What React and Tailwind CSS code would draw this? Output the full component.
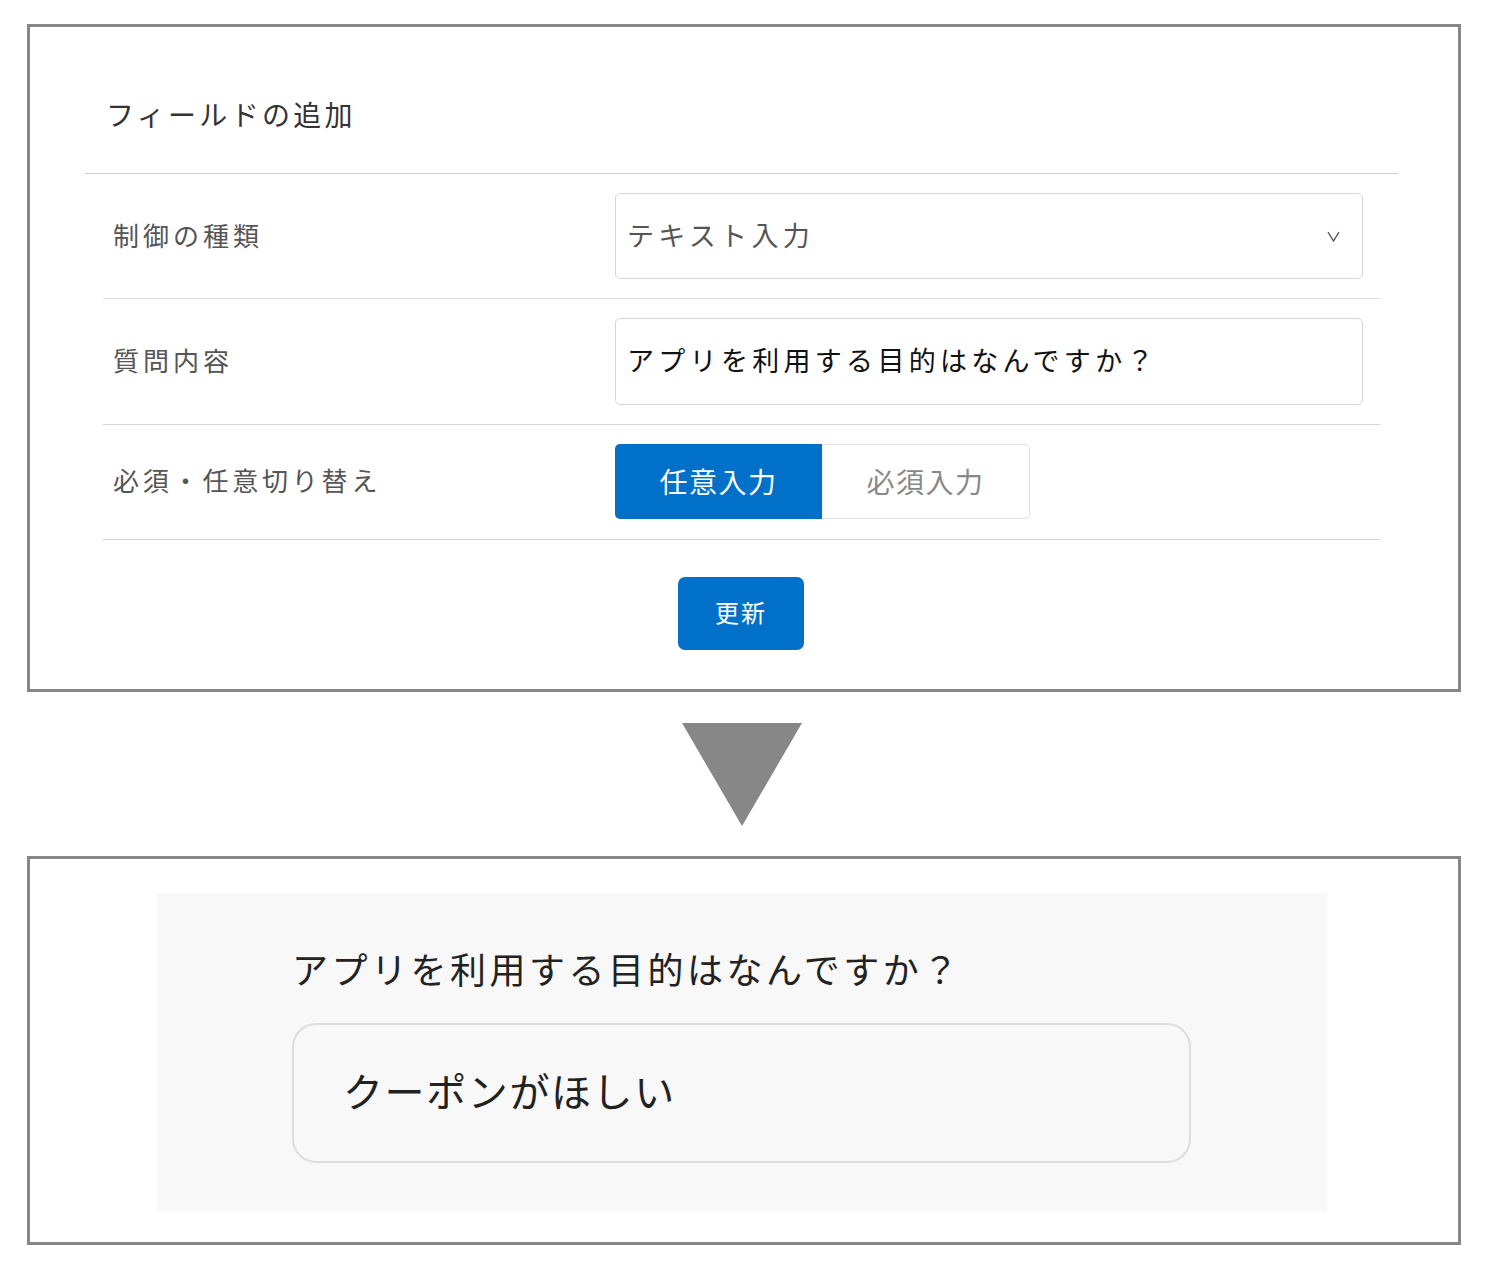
export default function App() {
  const font = { fontFamily: '"Noto Sans CJK JP", "Noto Sans", sans-serif' };
  return (
    <div className="bg-white w-[1488px] min-h-[1269px] pt-[24px] pl-[27px]" style={font}>
      {/* Top panel */}
      <div className="w-[1434px] border-[3px] border-[#878787] bg-white">
        <div className="ml-[55px] mr-[60px] border-b border-[#cccccc]">
          <div className="pl-[21px] pt-[67px] pb-[39px] leading-[40px] text-[28px] tracking-[3.3px] text-[#333333]">
            フィールドの追加
          </div>
        </div>
        <div className="ml-[73px] mr-[78px]">
          <div className="flex items-center border-b border-[#dddddd] pt-[19px] pb-[19px] pr-[17px]">
            <div className="w-[512px] pl-[10px] pb-[2px] text-[26px] tracking-[4px] text-[#555555] leading-none">
              制御の種類
            </div>
            <div className="flex-1 h-[86px] border border-[#d6d6d6] rounded-[5px] flex items-center justify-between pl-[11px] pr-[22px]">
              <span className="text-[27px] tracking-[4.3px] text-[#555555] pb-[2px]">テキスト入力</span>
              <svg width="13" height="11" viewBox="0 0 13 11">
                <path d="M1 1 L6.5 10 L12 1" fill="none" stroke="#555555" strokeWidth="1.4" />
              </svg>
            </div>
          </div>
          <div className="flex items-center border-b border-[#d4d4d4] pt-[19px] pb-[19px] pr-[17px]">
            <div className="w-[512px] pl-[10px] pb-[3px] text-[26px] tracking-[4px] text-[#555555] leading-none">
              質問内容
            </div>
            <div className="flex-1 h-[87px] border border-[#d6d6d6] rounded-[5px] flex items-center pl-[11px]">
              <span className="text-[27px] tracking-[4.3px] text-[#111111] pb-[2px]">アプリを利用する目的はなんですか？</span>
            </div>
          </div>
          <div className="flex items-center border-b border-[#d4d4d4] pt-[19px] pb-[20px] pr-[17px]">
            <div className="w-[512px] pl-[10px] pb-[3px] text-[26px] tracking-[3.8px] text-[#555555] leading-none">
              必須・任意切り替え
            </div>
            <div className="flex h-[75px] w-[415px]">
              <div className="w-[207px] bg-[#0070c9] rounded-l-[5px] flex items-center justify-center pb-[2px] text-white text-[28px] tracking-[1.5px]">
                任意入力
              </div>
              <div className="flex-1 border border-l-0 border-[#e0e0e0] rounded-r-[5px] flex items-center justify-center pb-[2px] text-[#888888] text-[28px] tracking-[1.5px]">
                必須入力
              </div>
            </div>
          </div>
        </div>
        <div className="flex justify-center pt-[37px] pb-[39px] pr-[6px]">
          <div className="w-[126px] h-[73px] bg-[#0070c9] rounded-[7px] flex items-center justify-center pb-[4px] text-white text-[24px] tracking-[2px]">
            更新
          </div>
        </div>
      </div>

      {/* Arrow */}
      <div className="w-[1434px] flex justify-center pt-[31px] pb-[30px] pr-[4px]">
        <svg width="120" height="103" viewBox="0 0 120 103">
          <polygon points="0,0 120,0 60,103" fill="#878787" />
        </svg>
      </div>

      {/* Bottom panel */}
      <div className="w-[1434px] border-[3px] border-[#878787] bg-white pt-[34px] pb-[30px] pl-[127px] pr-[131px]">
        <div className="bg-[#f8f8f8] h-[319px] pl-[135px] pt-[49px]">
          <div className="text-[36px] leading-[52px] tracking-[3.5px] text-[#222222]">
            アプリを利用する目的はなんですか？
          </div>
          <div className="mt-[29px] w-[899px] h-[140px] border-[2px] border-[#dddddd] rounded-[24px] flex items-center pl-[49px] pb-[6px]">
            <span className="text-[40px] tracking-[1.6px] text-[#222222]">クーポンがほしい</span>
          </div>
        </div>
      </div>
    </div>
  );
}
